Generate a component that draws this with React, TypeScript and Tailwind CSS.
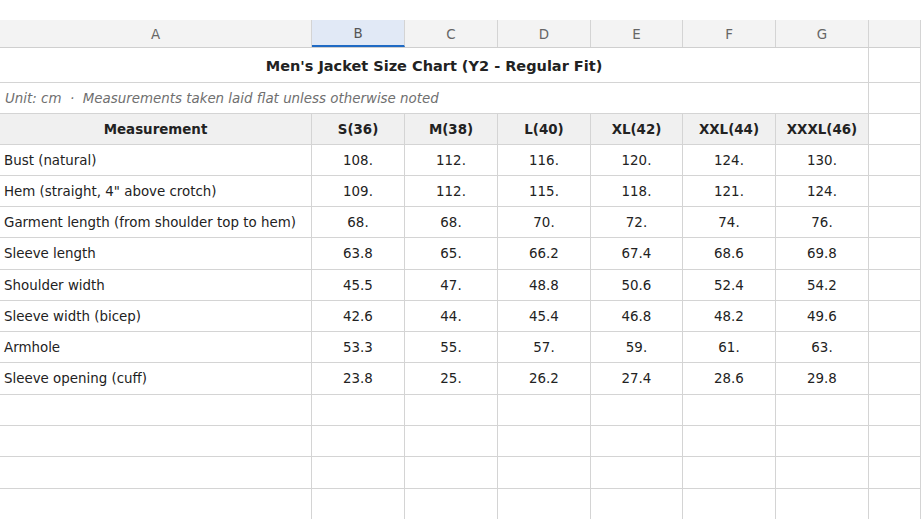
import React from 'react';

const cols = 'grid grid-cols-[312px_93px_93px_93px_92px_93px_93px_52px]';

const sizes = ['S(36)', 'M(38)', 'L(40)', 'XL(42)', 'XXL(44)', 'XXXL(46)'];

const rows = [
  { label: 'Bust (natural)', values: ['108.', '112.', '116.', '120.', '124.', '130.'], h: 'h-[31px]' },
  { label: 'Hem (straight, 4" above crotch)', values: ['109.', '112.', '115.', '118.', '121.', '124.'], h: 'h-[31px]' },
  { label: 'Garment length (from shoulder top to hem)', values: ['68.', '68.', '70.', '72.', '74.', '76.'], h: 'h-[31px]' },
  { label: 'Sleeve length', values: ['63.8', '65.', '66.2', '67.4', '68.6', '69.8'], h: 'h-[32px]' },
  { label: 'Shoulder width', values: ['45.5', '47.', '48.8', '50.6', '52.4', '54.2'], h: 'h-[31px]' },
  { label: 'Sleeve width (bicep)', values: ['42.6', '44.', '45.4', '46.8', '48.2', '49.6'], h: 'h-[31px]' },
  { label: 'Armhole', values: ['53.3', '55.', '57.', '59.', '61.', '63.'], h: 'h-[31px]' },
  { label: 'Sleeve opening (cuff)', values: ['23.8', '25.', '26.2', '27.4', '28.6', '29.8'], h: 'h-[32px]' },
  { label: '', values: ['', '', '', '', '', ''], h: 'h-[31px]' },
  { label: '', values: ['', '', '', '', '', ''], h: 'h-[31px]' },
  { label: '', values: ['', '', '', '', '', ''], h: 'h-[32px]' },
  { label: '', values: ['', '', '', '', '', ''], h: 'h-[31px]' },
];

const letters = ['A', 'B', 'C', 'D', 'E', 'F', 'G', ''];

export default function App() {
  return (
    <div className="min-h-[519px] bg-white pt-[20px] font-['DejaVu_Sans',sans-serif] text-[13.4px] text-[#222]">
      <div className="w-[921px] border-r border-[#d4d4d4]">
        {/* Column letters */}
        <div className={`${cols} h-[28px] bg-[#f3f3f3] border-b border-[#cfcfcf]`}>
          {letters.map((l, i) => (
            <div
              key={i}
              className={
                i === 1
                  ? 'flex items-center justify-center pt-[3px] bg-[#e1e9f6] border-b-2 border-[#1f6ac4] border-r border-r-[#d4d4d4] text-[#555]'
                  : 'flex items-center justify-center pt-[3px] border-r border-[#d4d4d4] text-[#666]'
              }
            >
              {l}
            </div>
          ))}
        </div>

        {/* Title */}
        <div className={`${cols} h-[35px]`}>
          <div className="col-span-7 flex items-center justify-center pt-[3px] border-r border-b border-[#d4d4d4] font-bold text-[14.5px] text-[#222]">
            Men's Jacket Size Chart (Y2 - Regular Fit)
          </div>
          <div className="border-b border-[#d4d4d4]" />
        </div>

        {/* Unit note */}
        <div className={`${cols} h-[31px]`}>
          <div className="col-span-7 flex items-center px-[5px] pt-[2px] border-r border-b border-[#d4d4d4] italic text-[#6f6f6f]">
            Unit: cm&nbsp;&nbsp;·&nbsp;&nbsp;Measurements taken laid flat unless otherwise noted
          </div>
          <div className="border-b border-[#d4d4d4]" />
        </div>

        {/* Table header */}
        <div className={`${cols} h-[31px]`}>
          <div className="flex items-center justify-center pt-[2px] bg-[#f0f0f0] border-r border-b border-[#d4d4d4] font-bold">
            Measurement
          </div>
          {sizes.map((s) => (
            <div key={s} className="flex items-center justify-center pt-[2px] bg-[#f0f0f0] border-r border-b border-[#d4d4d4] font-bold">
              {s}
            </div>
          ))}
          <div className="border-b border-[#d4d4d4]" />
        </div>

        {/* Data rows */}
        {rows.map((r, i) => (
          <div key={i} className={`${cols} ${r.h}`}>
            <div className="flex items-center px-[4px] pt-[2px] border-r border-b border-[#d4d4d4] whitespace-nowrap text-[#222]">
              {r.label}
            </div>
            {r.values.map((v, j) => (
              <div key={j} className="flex items-center justify-center pt-[2px] border-r border-b border-[#d4d4d4] text-[#222]">
                {v}
              </div>
            ))}
            <div className="border-b border-[#d4d4d4]" />
          </div>
        ))}
      </div>
    </div>
  );
}
